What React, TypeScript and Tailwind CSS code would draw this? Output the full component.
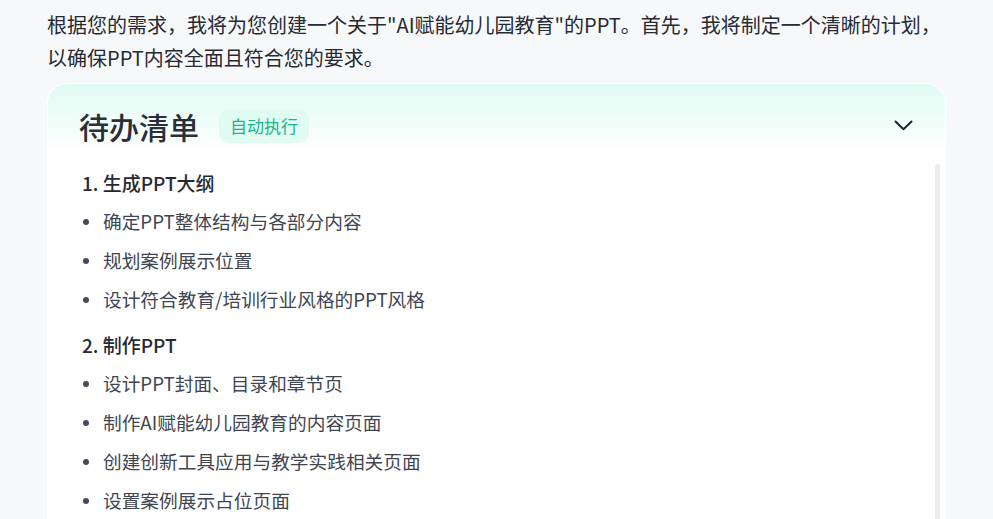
const font = 'font-["Noto_Sans_CJK_SC","Noto_Sans",sans-serif]';

const sections = [
  {
    title: '1. 生成PPT大纲',
    items: ['确定PPT整体结构与各部分内容', '规划案例展示位置', '设计符合教育/培训行业风格的PPT风格'],
  },
  {
    title: '2. 制作PPT',
    items: ['设计PPT封面、目录和章节页', '制作AI赋能幼儿园教育的内容页面', '创建创新工具应用与教学实践相关页面', '设置案例展示占位页面'],
  },
];

export default function App() {
  return (
    <div className={`min-h-screen bg-[#f7f8fa] px-[47px] pt-[8px] ${font}`}>
      <p className="text-[20px] leading-[33px] text-[#262a33]">
        根据您的需求，我将为您创建一个关于"AI赋能幼儿园教育"的PPT。首先，我将制定一个清晰的计划，以确保PPT内容全面且符合您的要求。
      </p>

      {/* Todo card */}
      <div className="mt-[9px] overflow-hidden rounded-t-[20px] border-[1.5px] border-b-0 border-white bg-white">
        <div className="flex h-[68px] items-center justify-between bg-gradient-to-b from-[#e0fbf3] via-[#eefdf8] to-white pl-[31px] pr-[32px] pt-[15px]">
          <div className="flex items-center gap-[20px]">
            <h2 className="text-[30px] font-medium leading-none text-[#2a2f38]">待办清单</h2>
            <span className="flex h-[34px] items-center rounded-[10px] bg-[#dcfaf0]/80 px-[11px] text-[17px] text-[#1db48d]">
              自动执行
            </span>
          </div>
          <svg width="19" height="11" viewBox="0 0 19 11" fill="none" className="text-[#1f2430]">
            <path d="M1.5 1.5 L9.5 9.3 L17.5 1.5" stroke="currentColor" strokeWidth="2" strokeLinecap="round" strokeLinejoin="round" />
          </svg>
        </div>

        <div className="flex">
          <div className="flex-1 pl-[34px] pt-[12px]">
            {sections.map((s, i) => (
              <div key={s.title} className={i > 0 ? 'mt-[7px]' : ''}>
                <div className="flex h-[38px] items-center text-[19px] font-medium text-[#262a33]">{s.title}</div>
                <ul>
                  {s.items.map((it) => (
                    <li key={it} className="flex h-[39px] items-center text-[18.7px] text-[#3f4652]">
                      <span className="ml-[1px] mr-[14px] h-[6px] w-[6px] rounded-full bg-[#454c59]" />
                      {it}
                    </li>
                  ))}
                </ul>
              </div>
            ))}
          </div>
          <div className="mr-[5px] mt-[12px] w-[5px] rounded-full bg-[#ececee]" />
        </div>
      </div>
    </div>
  );
}
